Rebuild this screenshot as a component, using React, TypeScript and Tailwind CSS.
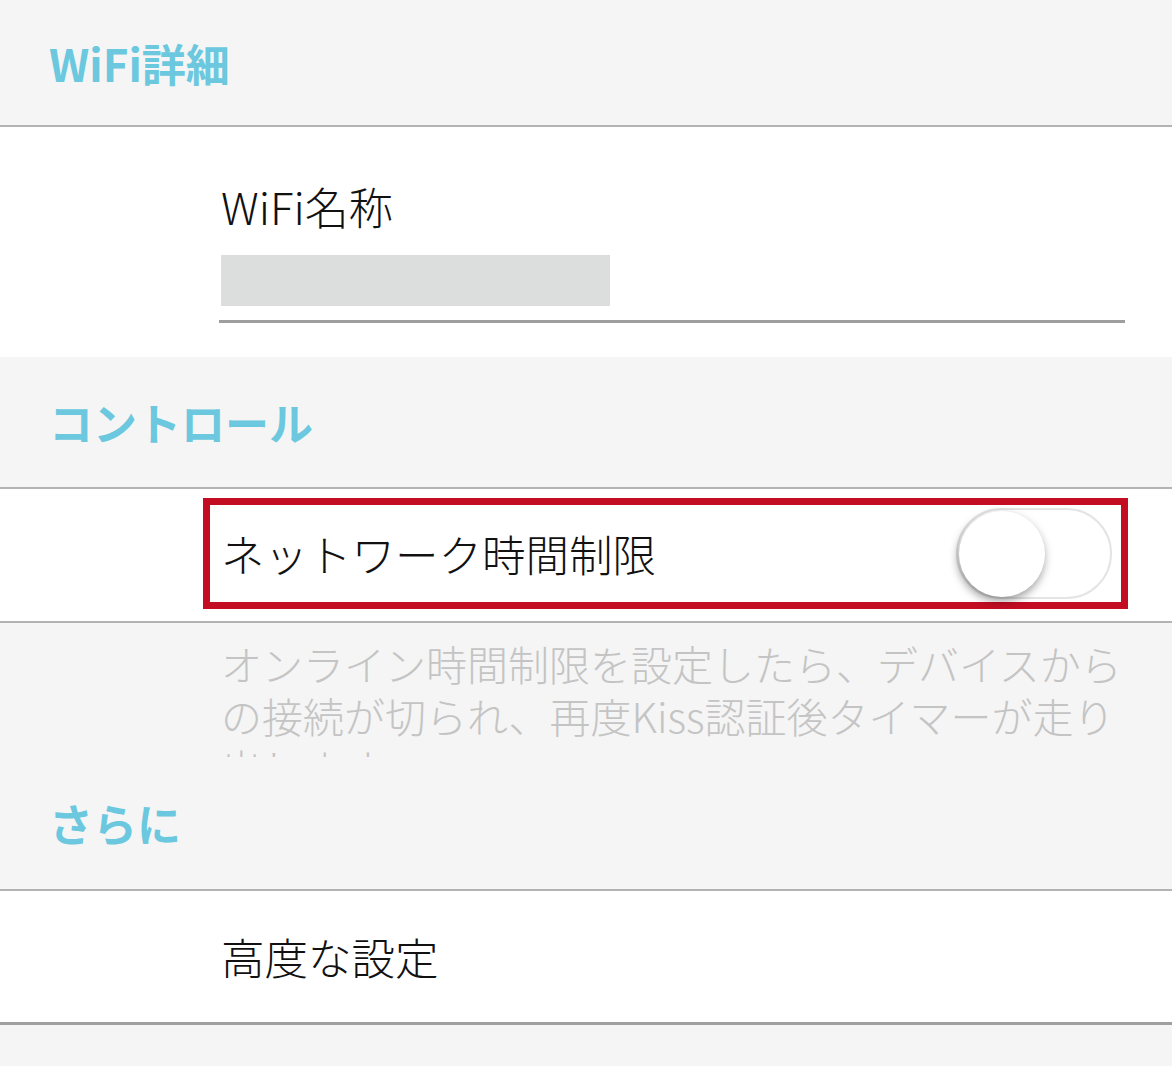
const FONT = "font-['Noto_Sans_CJK_JP','Noto_Sans',sans-serif]";

function SectionHeader({ title, className = "" }: { title: string; className?: string }) {
  return (
    <div className={`flex items-center border-b-2 border-[#b3b3b3] bg-[#f5f5f5] pl-[49px] ${className}`}>
      <span className="text-[44px] font-bold leading-none text-[#6cc8de]">{title}</span>
    </div>
  );
}

function Toggle({ on }: { on: boolean }) {
  return (
    <div className="relative h-[91px] w-[156px] shrink-0 rounded-full border-2 border-[#e4e4e4] bg-white">
      <div
        className={`absolute top-[1px] h-[86px] w-[86px] rounded-full bg-white shadow-[-1px_4px_10px_rgba(0,0,0,0.4)] ${
          on ? "right-[1px]" : "left-[1px]"
        }`}
      />
    </div>
  );
}

export default function App() {
  return (
    <div className={`${FONT} flex min-h-[1066px] w-full flex-col bg-[#f5f5f5]`}>
      <SectionHeader title="WiFi詳細" className="h-[127px] shrink-0" />

      <div className="flex h-[230px] shrink-0 flex-col bg-white pl-[221px] pr-[47px] pt-[57px]">
        <span className="text-[44px] font-light leading-none text-[#111]">WiFi名称</span>
        <div className="mt-[27px] h-[51px] w-[389px] bg-[#dcdddd]" />
        <div className="-ml-[2px] mt-[14px] h-[3px] bg-[#9e9e9e]" />
      </div>

      <SectionHeader title="コントロール" className="h-[132px] shrink-0" />

      <div className="flex h-[134px] shrink-0 flex-col border-b-2 border-[#b3b3b3] bg-white pb-[12px] pl-[203px] pr-[44px] pt-[9px]">
        <div className="flex flex-1 items-center justify-between border-[7px] border-[#c30d23] pl-[11px] pr-[9px]">
          <span className="text-[43.5px] font-light leading-none text-[#111]">ネットワーク時間制限</span>
          <Toggle on={false} />
        </div>
      </div>

      <div className="h-[134px] shrink-0 overflow-hidden pl-[221px] pr-[45px] pt-[14px]">
        <p className="text-[41px] font-light leading-[52px] text-[#c4c4c4]">
          オンライン時間制限を設定したら、デバイスからの接続が切られ、再度Kiss認証後タイマーが走り出します。
        </p>
      </div>

      <SectionHeader title="さらに" className="h-[134px] shrink-0" />

      <div className="flex h-[134px] shrink-0 items-center border-b-[3px] border-[#a0a0a0] bg-white pl-[221px]">
        <span className="text-[43.5px] font-light leading-none text-[#111]">高度な設定</span>
      </div>

      <div className="flex-1 bg-[#f5f5f5]" />
    </div>
  );
}
